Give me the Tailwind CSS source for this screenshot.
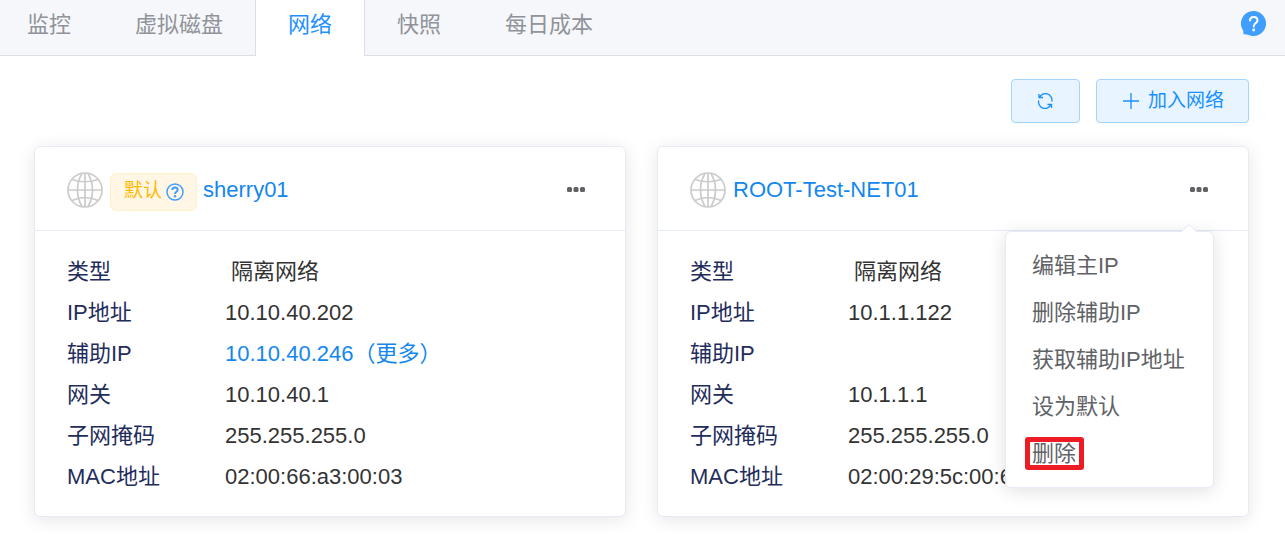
<!DOCTYPE html>
<html lang="zh-CN">
<head>
<meta charset="utf-8">
<title>网络</title>
<script src="https://cdn.jsdelivr.net/npm/@tailwindcss/browser@4"></script>
</head>
<body class="bg-white font-['Liberation_Sans','Noto_Sans_CJK_SC',sans-serif] text-[22px] text-[#333333]">
<svg class="hidden" aria-hidden="true">
  <symbol id="globe" viewBox="0 0 36 36">
    <g fill="none" stroke="#cbcbcb" stroke-width="1.700">
      <circle cx="18" cy="18" r="17"/>
      <path d="M15 1.500Q10.500 9 10.500 18T15 34.500M21 1.500Q25.500 9 25.500 18T21 34.500"/>
      <path d="M18 1v34M1 18h34M5 7.500Q18 12 31 7.500M5 28.500Q18 22.500 31 28.500"/>
    </g>
  </symbol>
  <symbol id="dots" viewBox="0 0 18 6">
    <g fill="#606266"><rect width="5" height="5" rx="1.500"/><rect x="6.500" width="5" height="5" rx="1.500"/><rect x="13" width="5" height="5" rx="1.500"/></g>
  </symbol>
</svg>

<header class="flex h-14 items-stretch bg-[#f5f7fa]">
  <nav class="flex flex-1 text-[#909399]" aria-label="标签页">
    <a href="#monitor" class="border-b border-[#dcdfe6] pr-8 pl-[27px] leading-[50px]">监控</a>
    <a href="#disk" class="border-b border-[#dcdfe6] px-8 leading-[50px]">虚拟磁盘</a>
    <a href="#network" aria-current="page" class="border-x border-[#dcdfe6] bg-white px-8 leading-[50px] text-[#1e90ff]">网络</a>
    <a href="#snapshot" class="border-b border-[#dcdfe6] px-8 leading-[50px]">快照</a>
    <a href="#cost" class="border-b border-[#dcdfe6] px-8 leading-[50px]">每日成本</a>
    <span class="flex-1 border-b border-[#dcdfe6]"></span>
  </nav>
  <div class="border-b border-[#dcdfe6] pt-[11px] pr-[19px]">
    <button type="button" aria-label="帮助" class="block">
      <svg class="size-[25px]" viewBox="0 0 25 25"><path fill="#409eff" d="M12.500 0A12.500 12.500 0 1 1 7 23.700Q4.500 23 2.500 23.200Q2.200 20.500 2.300 19.700A12.500 12.500 0 0 1 12.500 0Z"/><path d="M9 9.500Q9 6 12.700 6T16.500 9.500C16.500 12 12.700 12.300 12.700 15.500" fill="none" stroke="#fff" stroke-width="2" stroke-linecap="round"/><circle cx="12.700" cy="19" r="1.400" fill="#fff"/></svg>
    </button>
  </div>
</header>

<main class="pt-[23px] pr-9 pb-4 pl-[34px]">
  <div class="flex justify-end gap-4">
    <button type="button" aria-label="刷新" class="flex h-11 w-[69px] items-center justify-center rounded border border-[#a3d3ff] bg-[#e8f4ff]">
      <svg class="size-[16px]" viewBox="0 0 16 16" fill="none" stroke="#1890ff" stroke-width="1.300"><path d="M2 1v3.500h4M2.500 4.500A6.500 6.500 0 0 1 14.800 8.500M14.500 15v-3.500h-4M14 11.500A6.500 6.500 0 0 1 1.700 7.500"/></svg>
    </button>
    <button type="button" class="flex h-11 items-center gap-[9px] rounded border border-[#a3d3ff] bg-[#e8f4ff] pr-6 pl-[26px] text-[19px] leading-[42px] text-[#1890ff]">
      <svg class="size-4" viewBox="0 0 16 16" stroke="#1890ff" stroke-width="1.300"><path d="M0 8h16M8 0v16"/></svg>
      加入网络
    </button>
  </div>

  <div class="mt-[23px] grid grid-cols-2 gap-[31px]">
    <article class="rounded-md border border-[#e6ebf5] bg-white shadow-[0_3px_18px_rgba(0,0,0,0.1)]">
      <header class="flex h-[84px] items-center border-b border-[#e6ebf5] px-8 pt-[2px]">
        <svg class="size-9"><use href="#globe"/></svg>
        <span class="mt-1 mr-[6px] ml-[7px] flex h-[38px] items-center gap-1 rounded-md border border-[#fff1cc] bg-[#fff6e6] pr-3 pl-[13px] text-[19px] text-[#ffba00]">默认
          <svg class="size-[18px]" viewBox="0 0 18 18" fill="none" stroke="#409eff"><circle cx="9" cy="9" r="8" stroke-width="1.500"/><path d="M6.300 7Q6.300 4.500 9 4.500T11.700 7C11.700 8.800 9 8.800 9 11" stroke-width="2"/><circle cx="9" cy="13.300" r="1.200" fill="#409eff" stroke="none"/></svg>
        </span>
        <a href="#sherry01" class="text-[#1487ee]">sherry01</a>
        <button type="button" aria-label="更多操作" class="ml-auto px-2 py-2"><svg class="h-[6px] w-[18px]"><use href="#dots"/></svg></button>
      </header>
      <dl class="grid grid-cols-[158px_1fr] px-8 pt-5 pb-[19px] leading-[41px]">
        <dt class="text-[#1f2d5c]">类型</dt><dd class="whitespace-nowrap">&nbsp;隔离网络</dd>
        <dt class="text-[#1f2d5c]">IP地址</dt><dd class="whitespace-nowrap">10.10.40.202</dd>
        <dt class="text-[#1f2d5c]">辅助IP</dt><dd class="whitespace-nowrap"><a href="#more" class="text-[#1487ee]">10.10.40.246（更多）</a></dd>
        <dt class="text-[#1f2d5c]">网关</dt><dd class="whitespace-nowrap">10.10.40.1</dd>
        <dt class="text-[#1f2d5c]">子网掩码</dt><dd class="whitespace-nowrap">255.255.255.0</dd>
        <dt class="text-[#1f2d5c]">MAC地址</dt><dd class="whitespace-nowrap">02:00:66:a3:00:03</dd>
      </dl>
    </article>

    <article class="relative rounded-md border border-[#e6ebf5] bg-white shadow-[0_3px_18px_rgba(0,0,0,0.1)]">
      <header class="flex h-[84px] items-center border-b border-[#e6ebf5] px-8 pt-[2px]">
        <svg class="mr-[7px] size-9"><use href="#globe"/></svg>
        <a href="#root-net" class="text-[#1487ee]">ROOT-Test-NET01</a>
        <button type="button" aria-label="更多操作" aria-expanded="true" class="ml-auto px-2 py-2"><svg class="h-[6px] w-[18px]"><use href="#dots"/></svg></button>
      </header>
      <dl class="grid grid-cols-[158px_1fr] px-8 pt-5 pb-[19px] leading-[41px]">
        <dt class="text-[#1f2d5c]">类型</dt><dd class="whitespace-nowrap">&nbsp;隔离网络</dd>
        <dt class="text-[#1f2d5c]">IP地址</dt><dd class="whitespace-nowrap">10.1.1.122</dd>
        <dt class="text-[#1f2d5c]">辅助IP</dt><dd></dd>
        <dt class="text-[#1f2d5c]">网关</dt><dd class="whitespace-nowrap">10.1.1.1</dd>
        <dt class="text-[#1f2d5c]">子网掩码</dt><dd class="whitespace-nowrap">255.255.255.0</dd>
        <dt class="text-[#1f2d5c]">MAC地址</dt><dd class="whitespace-nowrap">02:00:29:5c:00:6</dd>
      </dl>
      <div class="absolute top-[84px] right-[34px] min-w-[209px] rounded-md border border-[#e6ebf5] bg-white py-[10px] text-[#606266] shadow-[0_3px_18px_rgba(0,0,0,0.12)]">
        <svg class="absolute -top-2 right-[15px] h-[9px] w-[18px]" viewBox="0 0 18 9"><path d="M0 9L9 1L18 9Z" fill="#fff"/><path d="M0 8.500L9 1L18 8.500" fill="none" stroke="#e6ebf5"/></svg>
        <button type="button" class="block w-full px-[26px] text-left leading-[47px]">编辑主IP</button>
        <button type="button" class="block w-full px-[26px] text-left leading-[47px]">删除辅助IP</button>
        <button type="button" class="block w-full px-[26px] text-left leading-[47px]">获取辅助IP地址</button>
        <button type="button" class="block w-full px-[26px] text-left leading-[47px]">设为默认</button>
        <button type="button" class="relative block w-full px-[26px] text-left leading-[47px]">删除<span class="absolute top-[7px] left-[19px] h-[33px] w-[59px] rounded-[3px] border-[5px] border-[#ed1c24]"></span></button>
      </div>
    </article>
  </div>
</main>
</body>
</html>
